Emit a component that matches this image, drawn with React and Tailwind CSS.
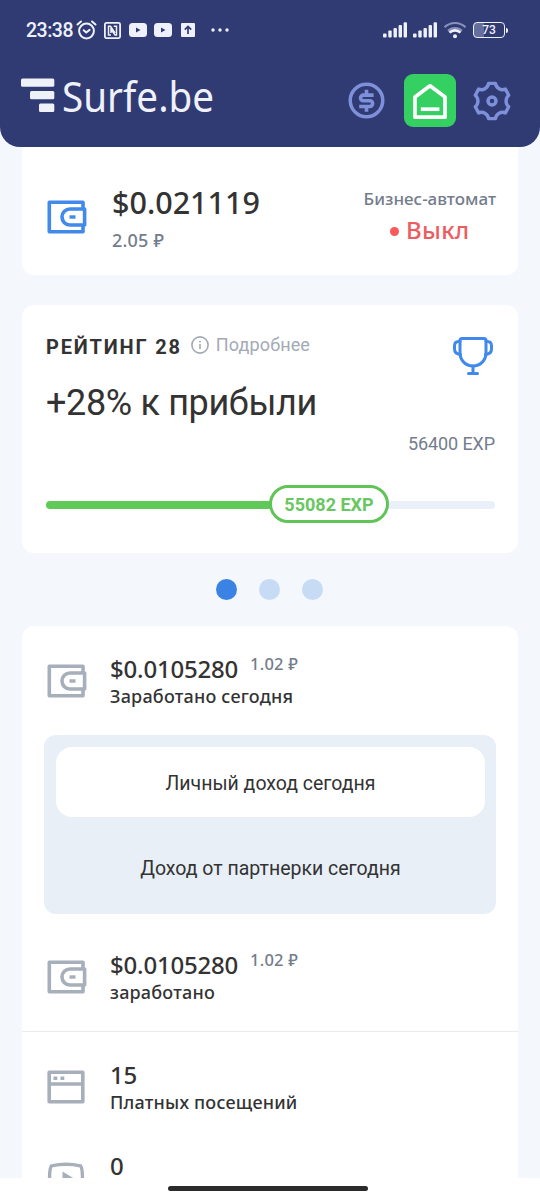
import clsx from 'clsx';

// icons
const WalletIcon = ({ className }) => (
    <svg className={className} width="40" height="34" viewBox="0 0 40 34" fill="none" stroke="currentColor" strokeWidth="3.6" strokeLinejoin="round">
        <path d="M36 8V2.300H2.300v29.400H36V26" />
        <path d="M37.600 9H23a8 8 0 0 0 0 16h14.600z" />
        <path d="M22.500 17h6" strokeWidth="3.400" />
    </svg>
);

const BrowserIcon = ({ className }) => (
    <svg className={className} width="38" height="34" viewBox="0 0 38 34" fill="none" stroke="currentColor" strokeWidth="3.6" strokeLinejoin="round">
        <path d="M2.200 2.200h33.600v29.600H2.200zM2.200 14h33.600" />
        <path d="M6.500 8.300h3.800M13.500 8.300h3.800" />
    </svg>
);

const VideoIcon = ({ className }) => (
    <svg className={className} width="38" height="34" viewBox="0 0 38 34" fill="none" stroke="currentColor" strokeWidth="3.4">
        <path d="M4.500 4.800C13 3 25 3 33.500 4.800Q35.500 7 35.500 18T33.500 31.200C25 33 13 33 4.500 31.200Q2.500 29 2.500 18T4.500 4.800z" />
        <path d="M15.500 10.500v14l11.500-7z" fill="currentColor" stroke="none" />
    </svg>
);

const TrophyIcon = () => (
    <svg className="text-[#4189ea]" width="42" height="40" viewBox="0 0 42 40" fill="none" stroke="currentColor" strokeWidth="3" strokeLinecap="round" strokeLinejoin="round">
        <path d="M10 2.500h22q2 0 2 2V17c0 7-5.500 13-13 13S8 24 8 17V4.500q0-2 2-2z" />
        <path d="M8 5.500H6.500q-4 0-4 4.500V13q0 5 6 5.500M34 5.500h1.500q4 0 4 4.500V13q0 5-6 5.500" />
        <path d="M21 30v7M16.500 37.500h9" />
    </svg>
);

const Signal = ({ className }) => (
    <svg className={className} width="25" height="16" viewBox="0 0 25 16" fill="#eef1fb">
        <rect x="0" y="11.500" width="3.600" height="4" rx="1" />
        <rect x="5.300" y="8.500" width="3.400" height="7" rx="1" />
        <rect x="10.500" y="6" width="3.400" height="9.500" rx="1" />
        <rect x="15.600" y="3" width="3.400" height="12.500" rx="1" />
        <rect x="20.600" y="0.200" width="3.400" height="15.300" rx="1" />
    </svg>
);

const YoutubeIcon = ({ className }) => (
    <svg className={className} width="18" height="14" viewBox="0 0 18 14">
        <rect width="18" height="14" rx="3.500" fill="#eef1fb" />
        <path d="M7 4.500v5l4.500-2.500z" fill="#313b73" />
    </svg>
);

function StatusBar() {
    return (
        <div className="flex h-[60px] items-center pl-[26px] text-[#eef1fb]">
            <span className="w-[48px] pt-px text-[19.500px] leading-6 font-medium tracking-[-0.5px]">23:38</span>
            <svg className="ml-[2px]" width="21" height="20" viewBox="0 0 21 20" fill="none" stroke="currentColor" strokeWidth="2" strokeLinecap="round">
                <circle cx="10.500" cy="11" r="7.400" />
                <path d="M1.500 4.500L5 1.500M19.500 4.500L16 1.500M7.700 10.200l2.500 2.300 3.400-2.600" />
            </svg>
            <svg className="ml-[7px]" width="17" height="17" viewBox="0 0 17 17" fill="none" stroke="currentColor" strokeWidth="1.800">
                <rect x="0.900" y="0.900" width="15.200" height="15.200" rx="1.500" />
                <path d="M7 13H4.500V4.200h2L11 11M9.700 4.200h2.800V13H11L7 7.300V11" strokeWidth="1.500" />
            </svg>
            <YoutubeIcon className="ml-2" />
            <YoutubeIcon className="ml-[7px]" />
            <svg className="ml-[9px]" width="14" height="14" viewBox="0 0 14 14">
                <rect width="14" height="14" rx="1" fill="#eef1fb" />
                <path d="M7 11V4M3.800 6.700L7 3.500l3.200 3.200" fill="none" stroke="#313b73" strokeWidth="1.700" />
            </svg>
            <svg className="ml-4" width="18" height="4" viewBox="0 0 18 4" fill="currentColor">
                <circle cx="2" cy="2" r="1.700" />
                <circle cx="9" cy="2" r="1.700" />
                <circle cx="16" cy="2" r="1.700" />
            </svg>
            <Signal className="ml-auto" />
            <Signal className="ml-[5px]" />
            <svg className="ml-[5px]" width="24" height="18" viewBox="0 0 24 18" fill="none" strokeWidth="2.200">
                <path d="M1.500 6.300a15 15 0 0 1 21 0M5 9.900a10 10 0 0 1 14 0" stroke="#8890bb" />
                <path d="M6.500 11.600a8 8 0 0 1 11 0" stroke="#eef1fb" strokeWidth="2.600" />
                <circle cx="12" cy="15.300" r="2" fill="#eef1fb" />
            </svg>
            <div className="ml-[6px] flex h-[16px] w-[32px] items-center rounded-[4px] border-[1.500px] border-[#eef1fb] bg-linear-to-r from-[#666e9e] from-35% to-transparent to-35% text-[12px] font-medium">
                <span className="w-full text-center leading-3">73</span>
            </div>
            <div className="mr-[32px] ml-px h-[5px] w-[2px] rounded-r bg-[#eef1fb]" />
        </div>
    );
}

function Header() {
    return (
        <header className="h-[147px] rounded-b-[20px] bg-[#313b73]">
            <StatusBar />
            <div className="flex items-start pt-[14px] pl-[21px]">
                <svg className="mt-1" width="34" height="35" viewBox="0 0 34 35" fill="#eff1f9">
                    <rect x="0" y="0.500" width="33.300" height="8.300" rx="1.500" />
                    <rect x="9" y="13" width="24.300" height="8.300" rx="1.500" />
                    <rect x="18" y="25.500" width="15.300" height="8.500" rx="1.500" />
                </svg>
                <span className="-mt-px ml-[7px] w-[169px] origin-left scale-x-[0.92] text-[42px] leading-[46px] whitespace-nowrap text-[#eff1f9] [font-family:'Noto_Sans',sans-serif]">Surfe.be</span>
                <div className="mr-[28px] ml-auto flex items-center">
                    <svg className="mr-px text-[#7e90da]" width="37" height="37" viewBox="0 0 38 38" fill="none" stroke="currentColor" strokeWidth="3.600">
                        <circle cx="19" cy="19" r="16.700" />
                        <path d="M26.300 13.500H15.800a2.900 2.900 0 0 0 0 5.800h6.600a2.900 2.900 0 0 1 0 5.800H11.500M19 8v5.500M19 25v5.500" strokeWidth="3.700" />
                    </svg>
                    <div className="ml-[18px] flex h-[53px] w-[52px] items-center justify-center rounded-[9px] bg-[#34d162]">
                        <svg width="36" height="38" viewBox="0 0 36 38" fill="none" stroke="#fff" strokeWidth="3.700" strokeLinejoin="round">
                            <path d="M3 35.200V15L18 3.800 33 15v20.200z" />
                            <path d="M8.800 27.200h18.600" />
                        </svg>
                    </div>
                    <svg className="ml-4 text-[#7e90da]" width="40" height="40" viewBox="-20 -20 40 40" fill="none" stroke="currentColor" strokeWidth="3.400" strokeLinejoin="round">
                        <path d="M-3.400-17.600L3.400-17.600C4.200-12.800 9-10 13.400-11.900L16.700-5.800C13.200-2.800 13.200 2.800 16.700 5.800L13.400 11.900C9 10 4.200 12.800 3.400 17.600L-3.400 17.600C-4.200 12.800-9 10-13.400 11.900L-16.700 5.800C-13.200 2.800-13.200-2.800-16.700-5.800L-13.400-11.900C-9-10-4.200-12.800-3.400-17.600z" />
                        <circle r="4" />
                    </svg>
                </div>
            </div>
        </header>
    );
}

function Balance() {
    return (
        <section className="mx-[22px] flex h-[128px] rounded-b-xl bg-white pr-[22px] pl-[25px] font-medium [font-family:'Noto_Sans',sans-serif]">
            <WalletIcon className="mt-[53px] text-[#4189ea]" />
            <div className="ml-[25px] pt-[35px]">
                <div className="text-[30.500px] leading-10 text-[#333]">$0.021119</div>
                <div className="mt-[6px] text-[18px] leading-6 tracking-[0.2px] text-[#737d8c]">2.05 ₽</div>
            </div>
            <div className="ml-auto flex flex-col items-center pt-[40px]">
                <div className="text-[17px] leading-6 text-[#737d8c]">Бизнес-автомат</div>
                <div className="mt-[3px] flex items-center text-[24px] leading-8 tracking-[0.3px] text-[#ec5d5f]">
                    <span className="mt-[3px] mr-[7px] size-[9px] rounded-full bg-[#f8595a]" />
                    Выкл
                </div>
            </div>
        </section>
    );
}

function Rating() {
    return (
        <section className="mx-[22px] mt-[30px] h-[248px] rounded-xl bg-white pr-[23px] pl-6">
            <div className="flex h-[76px] items-start pt-[28px]">
                <span className="mt-[2px] text-[20px] leading-6 font-bold tracking-[1.800px] text-[#333]">РЕЙТИНГ 28</span>
                <svg className="mt-[3px] ml-[9px] text-[#a3aab6]" width="18" height="18" viewBox="0 0 18 18" fill="none" stroke="currentColor" strokeWidth="1.600">
                    <circle cx="9" cy="9" r="8.100" />
                    <path d="M9 8v5M9 4.700v1.700" />
                </svg>
                <span className="ml-[7px] text-[18px] leading-6 tracking-[0.15px] text-[#a3aab6]">Подробнее</span>
                <div className="mr-px ml-auto pt-[3px]">
                    <TrophyIcon />
                </div>
            </div>
            <div className="text-[36px] leading-[45px] tracking-[-0.35px] text-[#333]">+28% к прибыли</div>
            <div className="mt-[5px] text-right text-[18px] leading-[25px] tracking-[-0.1px] text-[#737d8c]">56400 EXP</div>
            <div className="mt-[28px] flex h-[39px] items-center">
                <div className="mt-[3px] h-2 w-[224px] rounded-l-full bg-[#60ca58]" />
                <div className="relative -mx-px h-[38px] w-[120px] rounded-full border-[3px] border-[#60c457] bg-white text-center text-[18px] leading-[33px] font-bold text-[#68c760]">55082 EXP</div>
                <div className="mt-[3px] h-2 flex-1 rounded-r-full bg-[#e9f0fa]" />
            </div>
        </section>
    );
}

function StatRow({ icon: Icon, value, sub, label, className }) {
    return (
        <div className={clsx('flex h-14 shrink-0 items-start pl-[25px] font-medium text-[#333] [font-family:"Noto_Sans",sans-serif]', className)}>
            <div className="w-[63px] pt-[11px] text-[#a7afbb]">
                <Icon />
            </div>
            <div className="pt-1">
                <div className="flex items-start text-[24px] leading-6 tracking-[-0.2px]">
                    {value}
                    {sub && <span className="-mt-[3px] ml-3 text-[16.500px] leading-5 tracking-[0.2px] text-[#737d8c]">{sub}</span>}
                </div>
                {label && <div className="mt-[3px] text-[18px] leading-6 tracking-[0.2px]">{label}</div>}
            </div>
        </div>
    );
}

export default function App() {
    return (
        <div className="flex h-[1200px] w-[540px] flex-col overflow-hidden bg-white [font-family:Roboto,sans-serif]">
            <main className="flex h-[1178px] flex-col overflow-hidden bg-[#f4f8fd]">
                <Header />
                <Balance />
                <Rating />
                <div className="flex h-[73px] items-center justify-center gap-[22px] pr-[2px]">
                    <span className="size-[21px] rounded-full bg-[#3a82e4]" />
                    <span className="size-[21px] rounded-full bg-[#c7dbf4]" />
                    <span className="size-[21px] rounded-full bg-[#c7dbf4]" />
                </div>
                <section className="mx-[22px] flex h-[552px] flex-col overflow-hidden rounded-t-xl bg-white pt-[27px]">
                    <StatRow icon={WalletIcon} value="$0.0105280" sub="1.02 ₽" label="Заработано сегодня" />
                    {/* onglets du revenu */}
                    <div className="mx-[22px] mt-[26px] h-[179px] shrink-0 rounded-xl bg-[#e8eff7] pt-3 pr-[11px] pl-3 text-center text-[19.500px] text-[#333]">
                        <div className="h-[70px] rounded-2xl bg-white leading-[73px]">Личный доход сегодня</div>
                        <div className="mt-4 leading-[72px]">Доход от партнерки сегодня</div>
                    </div>
                    <StatRow className="mt-[35px]" icon={WalletIcon} value="$0.0105280" sub="1.02 ₽" label="заработано" />
                    <div className="mt-[26px] h-px shrink-0 bg-[#e8ebef]" />
                    <StatRow className="mt-[27px]" icon={BrowserIcon} value="15" label="Платных посещений" />
                    <StatRow className="mt-[35px]" icon={VideoIcon} value="0" />
                </section>
            </main>
            <div className="flex h-[22px] justify-center pt-2 pr-1">
                <div className="h-[5px] w-[200px] rounded-full bg-[#2b2b2b]" />
            </div>
        </div>
    );
}
